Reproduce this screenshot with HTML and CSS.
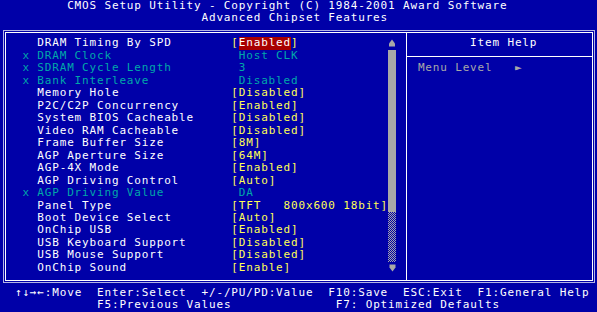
FILE: index.html
```html
<!DOCTYPE html>
<html lang="en">
<head>
  <meta charset="UTF-8">
  <meta name="viewport" content="width=device-width, initial-scale=1.0">
  <title>CMOS Setup Utility - Advanced Chipset Features</title>
  <link rel="stylesheet" href="styles.css">
</head>
<body>

    <div class="screen">

        <!-- Judul di atas -->
        <header class="title">
            <div class="title-main">CMOS Setup Utility - Copyright (C) 1984-2001 Award Software</div>
            <div class="title-sub">Advanced Chipset Features</div>
        </header>

        <!-- Kotak utama: daftar item + scrollbar + item help -->
        <div class="frame">

            <div class="items">
                <div class="row"><span class="mark"></span><span class="name">DRAM Timing By SPD</span><span class="val">[<span class="sel">Enabled</span>]</span></div>
                <div class="row off"><span class="mark">x</span><span class="name">DRAM Clock</span><span class="val plain">Host CLK</span></div>
                <div class="row off"><span class="mark">x</span><span class="name">SDRAM Cycle Length</span><span class="val plain">3</span></div>
                <div class="row off"><span class="mark">x</span><span class="name">Bank Interleave</span><span class="val plain">Disabled</span></div>
                <div class="row"><span class="mark"></span><span class="name">Memory Hole</span><span class="val">[Disabled]</span></div>
                <div class="row"><span class="mark"></span><span class="name">P2C/C2P Concurrency</span><span class="val">[Enabled]</span></div>
                <div class="row"><span class="mark"></span><span class="name">System BIOS Cacheable</span><span class="val">[Disabled]</span></div>
                <div class="row"><span class="mark"></span><span class="name">Video RAM Cacheable</span><span class="val">[Disabled]</span></div>
                <div class="row"><span class="mark"></span><span class="name">Frame Buffer Size</span><span class="val">[8M]</span></div>
                <div class="row"><span class="mark"></span><span class="name">AGP Aperture Size</span><span class="val">[64M]</span></div>
                <div class="row"><span class="mark"></span><span class="name">AGP-4X Mode</span><span class="val">[Enabled]</span></div>
                <div class="row"><span class="mark"></span><span class="name">AGP Driving Control</span><span class="val">[Auto]</span></div>
                <div class="row off"><span class="mark">x</span><span class="name">AGP Driving Value</span><span class="val plain">DA</span></div>
                <div class="row"><span class="mark"></span><span class="name">Panel Type</span><span class="val">[TFT   800x600 18bit]</span></div>
                <div class="row"><span class="mark"></span><span class="name">Boot Device Select</span><span class="val">[Auto]</span></div>
                <div class="row"><span class="mark"></span><span class="name">OnChip USB</span><span class="val">[Enabled]</span></div>
                <div class="row"><span class="mark"></span><span class="name">USB Keyboard Support</span><span class="val">[Disabled]</span></div>
                <div class="row"><span class="mark"></span><span class="name">USB Mouse Support</span><span class="val">[Disabled]</span></div>
                <div class="row"><span class="mark"></span><span class="name">OnChip Sound</span><span class="val">[Enable]</span></div>
            </div>

            <!-- Scrollbar -->
            <div class="scrollbar">
                <div class="arrow">
                    <svg width="8" height="13" viewBox="0 0 8 13"><polygon points="4,2.5 7,6.5 7,9.5 1,9.5 1,6.5" fill="#a8a8a8"/></svg>
                </div>
                <div class="thumb"></div>
                <div class="track"></div>
                <div class="arrow">
                    <svg width="8" height="13" viewBox="0 0 8 13"><polygon points="1.5,2.5 7.5,2.5 7.5,5.5 4.5,9.5 1.5,5.5" fill="#a8a8a8"/></svg>
                </div>
            </div>

            <div class="gap"></div>

            <!-- Item Help -->
            <div class="help">
                <div class="help-title">Item Help</div>
                <div class="help-rule"></div>
                <div class="help-line">Menu Level   ►</div>
            </div>

        </div>

        <!-- Tombol di bawah -->
        <footer class="keys">
            <div class="keys-line">  ↑↓→←:Move  Enter:Select  +/-/PU/PD:Value  F10:Save  ESC:Exit  F1:General Help</div>
            <div class="keys-line">             F5:Previous Values              F7: Optimized Defaults</div>
        </footer>

    </div>

</body>
</html>
```

FILE: styles.css
```css
/* 80 x 25 layar teks, satu sel = 7.4625 x 12.48 px */
:root {
  --cw: 7.4625px;
  --rh: 12.48px;
}

body {
  margin: 0;
  background-color: #0000a8;
}

.screen {
  width: 597px;
  height: 312px;
  overflow: hidden;
  font-family: "DejaVu Sans Mono", "Liberation Mono", monospace;
  font-size: 11px;
  letter-spacing: 0.84px;
  line-height: var(--rh);
  color: #ffffff;
}

/* Judul */
.title-main,
.title-sub {
  height: var(--rh);
  white-space: pre;
}

.title-main {
  padding-left: calc(9 * var(--cw));
}

.title-sub {
  padding-left: calc(27 * var(--cw));
}

/* Kotak dengan garis ganda */
.frame {
  box-sizing: border-box;
  width: 592px;
  height: 253px;
  margin: 5.04px 2px 4.04px 3px;
  border: 1px solid #b4b4e4;
  padding: 2px;
  box-shadow: inset 0 0 0 1px #0000a8, inset 0 0 0 2px #ffffff;
  display: grid;
  grid-template-columns: 382.05px var(--cw) 10.49px 1fr;
}

/* Daftar item */
.items {
  padding: 4.44px 0 0 16.39px;
}

.row {
  display: flex;
  height: var(--rh);
  white-space: pre;
}

.mark {
  width: calc(2 * var(--cw));
  flex-shrink: 0;
}

.name {
  width: calc(26 * var(--cw));
  flex-shrink: 0;
}

.val {
  color: #ffff54;
}

.val.plain {
  padding-left: var(--cw);
}

.row.off,
.row.off .val {
  color: #00a8a8;
}

.sel {
  display: inline-block;
  height: var(--rh);
  background-color: #a80000;
  color: #ffffff;
}

/* Scrollbar */
.scrollbar {
  padding-top: 4.44px;
}

.arrow {
  height: var(--rh);
}

.arrow svg {
  display: block;
}

.thumb {
  height: calc(13 * var(--rh));
  background-color: #a8a8a8;
}

.track {
  height: calc(4 * var(--rh));
  background: repeating-conic-gradient(#a8a8a8 0 25%, transparent 0 50%) 0 0 / 2px 2px;
}

/* Item Help */
.help {
  border-left: 1px solid #ffffff;
  padding: 4.44px 0 0 10.9px;
}

.help-title {
  height: var(--rh);
  padding-left: calc(7 * var(--cw));
  white-space: pre;
}

.help-rule {
  height: var(--rh);
  margin-left: -10.9px;
  background: linear-gradient(#ffffff, #ffffff) center / 100% 1px no-repeat;
}

.help-line {
  height: var(--rh);
  color: #a8a8a8;
  white-space: pre;
}

/* Baris tombol */
.keys-line {
  height: var(--rh);
  white-space: pre;
}
```
